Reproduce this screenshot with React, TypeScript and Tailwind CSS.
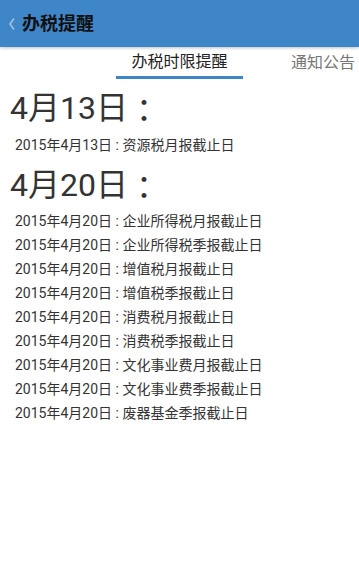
import React from "react";

const items20 = [
  "企业所得税月报截止日",
  "企业所得税季报截止日",
  "增值税月报截止日",
  "增值税季报截止日",
  "消费税月报截止日",
  "消费税季报截止日",
  "文化事业费月报截止日",
  "文化事业费季报截止日",
  "废器基金季报截止日",
];

function Colon() {
  return (
    <span className="inline-block translate-y-[3px]" style={{ fontFamily: '"Noto Sans CJK TC", sans-serif' }}>
      ：
    </span>
  );
}

export default function App() {
  const font = { fontFamily: 'Roboto, "Noto Sans CJK SC", sans-serif' };
  return (
    <div className="w-[359px] h-[566px] bg-white overflow-hidden" style={font}>
      <div className="h-[47px] bg-[#3f86c9] flex items-center shadow-[0_1px_3px_rgba(0,0,0,0.25)] relative z-10">
        <svg width="6" height="12" viewBox="0 0 6 12" className="ml-[9px]">
          <polyline points="5,0.5 1,6 5,11.5" fill="none" stroke="#a3c3e3" strokeWidth="1.6" />
        </svg>
        <span className="ml-[7px] text-[18px] font-bold text-[#111]">办税提醒</span>
      </div>
      <div className="h-[32px] flex items-stretch whitespace-nowrap">
        <div className="ml-[116px] w-[127px] flex flex-col">
          <div className="flex-1 flex items-center justify-center text-[16px] text-[#222]">办税时限提醒</div>
          <div className="h-[3px] bg-[#3f86c9]"></div>
        </div>
        <div className="ml-[48px] flex items-center text-[16px] text-[#777]">通知公告</div>
      </div>
      <div className="pt-[6px]">
        <div className="pl-[10px] h-[40px] leading-[40px] text-[32px] text-[#333]">
          4月13日<Colon />
        </div>
        <div className="mt-[8px] pl-[15px] h-[24px] leading-[24px] text-[14px] text-[#333]">2015年4月13日 : 资源税月报截止日</div>
        <div className="mt-[5px] pl-[10px] h-[40px] leading-[40px] text-[32px] text-[#333]">
          4月20日<Colon />
        </div>
        <div className="mt-[7px]">
          {items20.map((t) => (
            <div key={t} className="pl-[15px] h-[24px] leading-[24px] text-[14px] text-[#333]">
              2015年4月20日 : {t}
            </div>
          ))}
        </div>
      </div>
    </div>
  );
}
